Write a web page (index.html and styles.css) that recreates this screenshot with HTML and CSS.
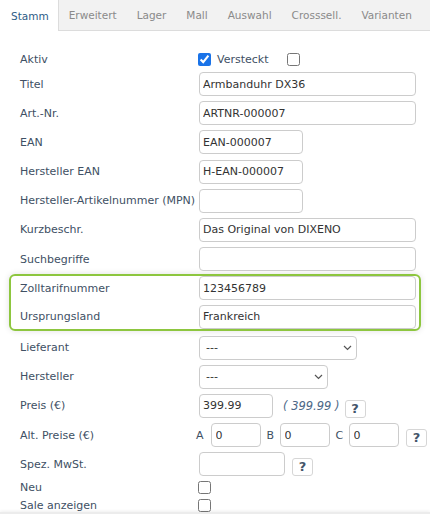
FILE: index.html
```html
<!DOCTYPE html>
<html lang="de">
<head>
    <meta charset="UTF-8">
    <meta name="viewport" content="width=device-width, initial-scale=1.0">
    <title>Artikel bearbeiten</title>
    <link rel="stylesheet" href="styles.css">
</head>
<body>
    <div class="tabs">
        <a class="tab active">Stamm</a>
        <a class="tab">Erweitert</a>
        <a class="tab">Lager</a>
        <a class="tab">Mall</a>
        <a class="tab">Auswahl</a>
        <a class="tab">Crosssell.</a>
        <a class="tab">Varianten</a>
    </div>

    <form class="article-form">
        <div class="row row-check row-first">
            <label>Aktiv</label>
            <div class="field">
                <input type="checkbox" checked>
                <span class="check-text">Versteckt</span>
                <input type="checkbox" class="check-hidden">
            </div>
        </div>

        <div class="row">
            <label>Titel</label>
            <div class="field"><input type="text" class="inp inp-full" value="Armbanduhr DX36"></div>
        </div>

        <div class="row">
            <label>Art.-Nr.</label>
            <div class="field"><input type="text" class="inp inp-full" value="ARTNR-000007"></div>
        </div>

        <div class="row">
            <label>EAN</label>
            <div class="field"><input type="text" class="inp inp-mid" value="EAN-000007"></div>
        </div>

        <div class="row">
            <label>Hersteller EAN</label>
            <div class="field"><input type="text" class="inp inp-mid" value="H-EAN-000007"></div>
        </div>

        <div class="row">
            <label>Hersteller-Artikelnummer (MPN)</label>
            <div class="field"><input type="text" class="inp inp-mid" value=""></div>
        </div>

        <div class="row">
            <label>Kurzbeschr.</label>
            <div class="field"><input type="text" class="inp inp-full" value="Das Original von DIXENO"></div>
        </div>

        <div class="row">
            <label>Suchbegriffe</label>
            <div class="field"><input type="text" class="inp inp-full" value=""></div>
        </div>

        <!-- highlighted customs block -->
        <div class="customs-box">
            <div class="row">
                <label>Zolltarifnummer</label>
                <div class="field"><input type="text" class="inp inp-full" value="123456789"></div>
            </div>
            <div class="row">
                <label>Ursprungsland</label>
                <div class="field"><input type="text" class="inp inp-full" value="Frankreich"></div>
            </div>
        </div>

        <div class="row">
            <label>Lieferant</label>
            <div class="field">
                <div class="select-wrap">
                    <select class="sel sel-supplier"><option>---</option></select>
                    <svg class="chevron" width="9" height="6" viewBox="0 0 9 6"><path d="M1 1 L4.5 4.5 L8 1" fill="none" stroke="#555" stroke-width="1.2"/></svg>
                </div>
            </div>
        </div>

        <div class="row">
            <label>Hersteller</label>
            <div class="field">
                <div class="select-wrap">
                    <select class="sel sel-maker"><option>---</option></select>
                    <svg class="chevron" width="9" height="6" viewBox="0 0 9 6"><path d="M1 1 L4.5 4.5 L8 1" fill="none" stroke="#555" stroke-width="1.2"/></svg>
                </div>
            </div>
        </div>

        <div class="row">
            <label>Preis (€)</label>
            <div class="field">
                <input type="text" class="inp inp-price" value="399.99">
                <span class="gross">( 399.99 )</span>
                <button type="button" class="help-btn">?</button>
            </div>
        </div>

        <div class="row">
            <label>Alt. Preise (€)</label>
            <div class="field alt-prices">
                <span class="alt-letter alt-first">A</span>
                <input type="text" class="inp inp-alt" value="0">
                <span class="alt-letter">B</span>
                <input type="text" class="inp inp-alt" value="0">
                <span class="alt-letter">C</span>
                <input type="text" class="inp inp-alt" value="0">
                <button type="button" class="help-btn">?</button>
            </div>
        </div>

        <div class="row row-tax">
            <label>Spez. MwSt.</label>
            <div class="field">
                <input type="text" class="inp inp-tax" value="">
                <button type="button" class="help-btn">?</button>
            </div>
        </div>

        <div class="row row-check">
            <label>Neu</label>
            <div class="field"><input type="checkbox"></div>
        </div>

        <div class="row row-check">
            <label>Sale anzeigen</label>
            <div class="field"><input type="checkbox"></div>
        </div>
    </form>

    <div class="footer-edge"></div>
</body>
</html>
```

FILE: styles.css
```css
* {
    margin: 0;
    padding: 0;
    box-sizing: border-box;
}

body {
    font-family: "DejaVu Sans", Verdana, sans-serif;
    font-size: 11px;
    color: #405064;
    background: #fff;
}

.tabs {
    display: flex;
    height: 31px;
    background-color: #f2f2f2;
    border-bottom: 1px solid #dcdcdc;
}

.tab {
    display: flex;
    align-items: center;
    padding: 0 10px;
    color: #8a8a8a;
    font-size: 10.5px;
    cursor: pointer;
}

.tab.active {
    background: #fff;
    color: #2d5c86;
    border-right: 1px solid #dcdcdc;
    margin-bottom: -1px;
    padding: 0 9px 0 11px;
}

.article-form {
    padding-top: 19.5px;
}

.row {
    display: grid;
    grid-template-columns: 179px 1fr;
    align-items: center;
    height: 24px;
    margin-bottom: 5.2px;
    padding: 0 14px 0 20px;
}

.row label {
    white-space: nowrap;
}

.field {
    display: flex;
    align-items: center;
}

.row-check {
    height: 18px;
    margin-bottom: 0;
}

.row-first {
    margin-bottom: 3.5px;
}

.row-tax {
    margin-bottom: 1.8px;
}

input[type="checkbox"] {
    width: 13px;
    height: 13px;
    margin: 0 0 0 -1px;
    accent-color: #1a73e8;
}

.check-text {
    margin-left: 6px;
}

.field .check-hidden {
    margin-left: 18px;
}

.inp {
    height: 24px;
    border: 1px solid #cccccc;
    border-radius: 4px;
    padding: 0 3px;
    font-family: "DejaVu Sans", Verdana, sans-serif;
    font-size: 11px;
    color: #333;
    background: #fff;
}

.inp-full {
    width: 217px;
}

.inp-mid {
    width: 104px;
}

.inp-price {
    width: 74px;
}

.inp-alt {
    width: 50px;
    padding-left: 4px;
}

.inp-tax {
    width: 86px;
}

.select-wrap {
    position: relative;
    display: flex;
}

.sel {
    appearance: none;
    -webkit-appearance: none;
    height: 24px;
    border: 1px solid #cccccc;
    border-radius: 4px;
    background: #fff;
    padding: 0 6px;
    font-family: "DejaVu Sans", Verdana, sans-serif;
    font-size: 11px;
    color: #333;
}

.chevron {
    position: absolute;
    right: 5px;
    top: 9px;
    pointer-events: none;
}

.sel-supplier {
    width: 158px;
}

.sel-maker {
    width: 129px;
}

.gross {
    font-style: italic;
    color: #4d6887;
    font-size: 11.5px;
    margin: 0 5px 0 10px;
}

.help-btn {
    width: 21px;
    height: 18px;
    border: 1px solid #d6d6d6;
    border-radius: 3px;
    background: #fff;
    color: #44556a;
    font-family: "DejaVu Sans", Verdana, sans-serif;
    font-size: 13px;
    font-weight: bold;
    line-height: 16px;
    align-self: flex-end;
}

.alt-prices {
    margin-left: -3px;
}

.alt-letter {
    width: 13px;
}

.alt-letter.alt-first {
    width: 14.5px;
}

.alt-prices .inp-alt {
    margin-right: 6px;
}

.alt-prices .help-btn {
    margin-left: 1.5px;
}

.row-tax .help-btn {
    margin-left: 7px;
}

.customs-box {
    margin: -2.4px 9px 4.7px;
    border: 2px solid #8dc63f;
    border-radius: 6px;
    box-shadow: 0 0 6px rgba(0, 0, 0, 0.12);
    padding: 0.5px 0 0;
}

.customs-box .row {
    padding: 0 3px 0 9px;
    margin-bottom: 4.5px;
}

.customs-box .row:last-child {
    margin-bottom: 0;
}

.footer-edge {
    position: fixed;
    left: 0;
    right: 0;
    bottom: 0;
    height: 2px;
    background: #ececec;
    box-shadow: 0 -1px 3px rgba(0, 0, 0, 0.08);
}
```
